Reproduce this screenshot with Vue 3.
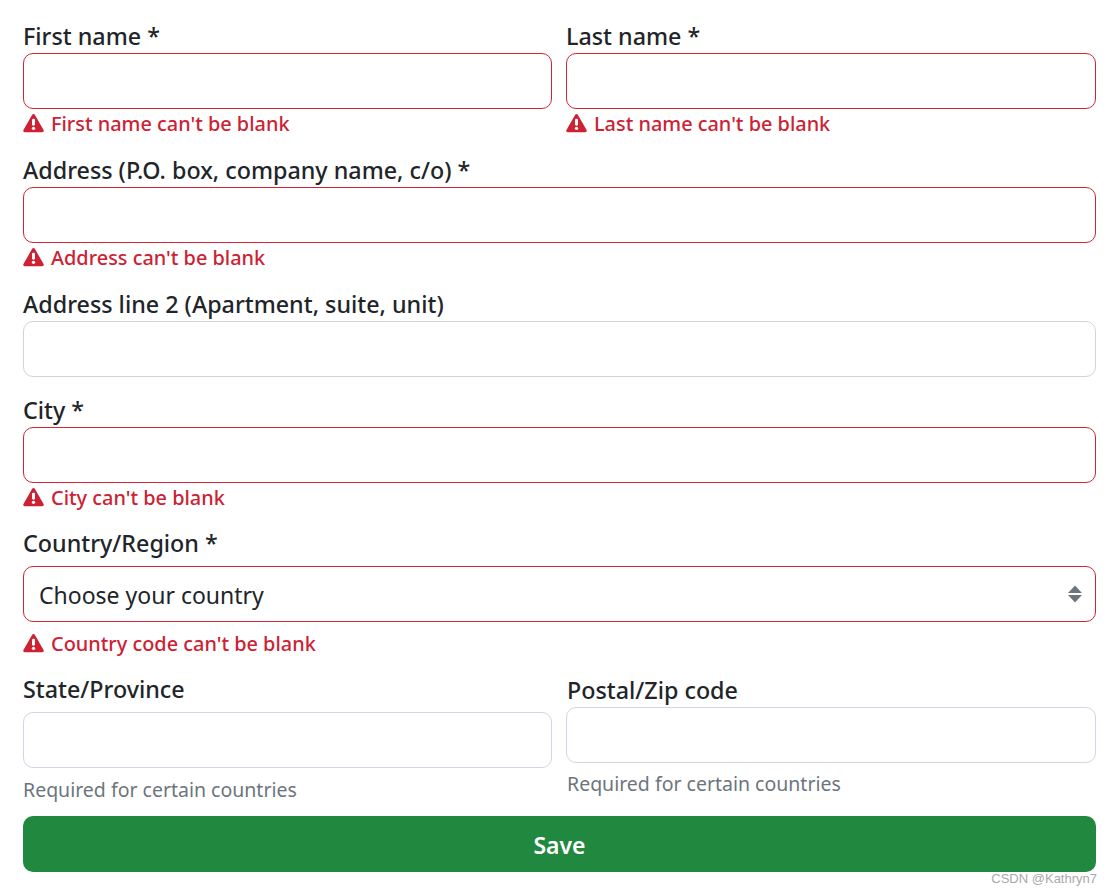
<script setup>
const errorIconPath = 'M10.5 1.2c.7-1.2 2.3-1.2 3 0l10 17.2c.7 1.2-.1 2.6-1.5 2.6H2c-1.4 0-2.200-1.400-1.500-2.600z'
</script>

<template>
  <form class="page" @submit.prevent>
    <div class="two">
      <div class="field err-gap">
        <label>First name *</label>
        <input class="ctl invalid" type="text" />
        <div class="error">
          <svg class="ico" viewBox="0 0 24 21"><path :d="errorIconPath" fill="#cc2233" /><rect x="10.300" y="5.500" width="3.400" height="8" rx="1.500" fill="#fff" /><circle cx="12" cy="16.600" r="1.900" fill="#fff" /></svg>
          <span>First name can't be blank</span>
        </div>
      </div>
      <div class="field err-gap">
        <label>Last name *</label>
        <input class="ctl invalid" type="text" />
        <div class="error">
          <svg class="ico" viewBox="0 0 24 21"><path :d="errorIconPath" fill="#cc2233" /><rect x="10.300" y="5.500" width="3.400" height="8" rx="1.500" fill="#fff" /><circle cx="12" cy="16.600" r="1.900" fill="#fff" /></svg>
          <span>Last name can't be blank</span>
        </div>
      </div>
    </div>

    <div class="field err-gap">
      <label>Address (P.O. box, company name, c/o) *</label>
      <input class="ctl invalid" type="text" />
      <div class="error">
        <svg class="ico" viewBox="0 0 24 21"><path :d="errorIconPath" fill="#cc2233" /><rect x="10.300" y="5.500" width="3.400" height="8" rx="1.500" fill="#fff" /><circle cx="12" cy="16.600" r="1.900" fill="#fff" /></svg>
        <span>Address can't be blank</span>
      </div>
    </div>

    <div class="field plain-gap">
      <label>Address line 2 (Apartment, suite, unit)</label>
      <input class="ctl" type="text" />
    </div>

    <div class="field city-gap">
      <label>City *</label>
      <input class="ctl invalid" type="text" />
      <div class="error">
        <svg class="ico" viewBox="0 0 24 21"><path :d="errorIconPath" fill="#cc2233" /><rect x="10.300" y="5.500" width="3.400" height="8" rx="1.500" fill="#fff" /><circle cx="12" cy="16.600" r="1.900" fill="#fff" /></svg>
        <span>City can't be blank</span>
      </div>
    </div>

    <div class="field country-gap">
      <label class="spaced">Country/Region *</label>
      <div class="select-wrap">
        <select class="ctl invalid sel">
          <option>Choose your country</option>
        </select>
        <svg class="updown" viewBox="0 0 14 18"><path d="M7 0.500L14 8H0z" fill="#6c757d" /><path d="M0 10h14L7 17.500z" fill="#6c757d" /></svg>
      </div>
      <div class="error">
        <svg class="ico" viewBox="0 0 24 21"><path :d="errorIconPath" fill="#cc2233" /><rect x="10.300" y="5.500" width="3.400" height="8" rx="1.500" fill="#fff" /><circle cx="12" cy="16.600" r="1.900" fill="#fff" /></svg>
        <span>Country code can't be blank</span>
      </div>
    </div>

    <div class="two last">
      <div class="field">
        <label class="spaced">State/Province</label>
        <input class="ctl soft" type="text" />
        <div class="help">Required for certain countries</div>
      </div>
      <div class="field postal">
        <label>Postal/Zip code</label>
        <input class="ctl soft" type="text" />
        <div class="help near">Required for certain countries</div>
      </div>
    </div>

    <button class="save" type="submit">Save</button>
    <div class="watermark">CSDN @Kathryn7</div>
  </form>
</template>

<style>
html, body { background: #fff; }
</style>

<style scoped>
.page {
  position: relative;
  box-sizing: border-box;
  width: 1112px;
  height: 896px;
  padding: 19px 16px 0 23px;
  font-family: "Noto Sans", "Open Sans", sans-serif;
  font-size: 24px;
  color: #212529;
  background: #fff;
}
.two {
  display: grid;
  grid-template-columns: 529px 530px;
  column-gap: 14px;
  align-items: start;
}
.field { display: flex; flex-direction: column; }
.err-gap { margin-bottom: 14px; }
.plain-gap { margin-bottom: 16px; }
.city-gap { margin-bottom: 13px; }
.country-gap { margin-bottom: 13px; }
label {
  display: block;
  height: 34px;
  line-height: 34px;
  font-size: 23.300px;
  font-weight: 500;
  white-space: nowrap;
}
label.spaced { margin-bottom: 6px; }
.postal { padding-top: 1px; padding-left: 1px; }
.ctl {
  display: block;
  box-sizing: border-box;
  width: 100%;
  height: 56px;
  margin: 0;
  padding: 0 14px;
  border: 1px solid #ced4da;
  border-radius: 10px;
  background: #fff;
  font: inherit;
  color: #212529;
  outline: none;
}
.invalid { border-color: #d32433; }
.soft { border-color: #d3d6e2; }
.postal .ctl { margin-left: -1px; width: calc(100% + 1px); }
.select-wrap { position: relative; margin-bottom: 7px; }
.sel { appearance: none; font-size: 23px; padding-top: 2px; padding-left: 15px; }
.updown {
  position: absolute;
  right: 14px;
  top: 19px;
  width: 14px;
  height: 18px;
}
.error {
  display: flex;
  align-items: center;
  gap: 7px;
  height: 28px;
  margin-bottom: 2px;
  font-size: 19.900px;
  font-weight: 500;
  color: #cc2233;
  white-space: nowrap;
}
.ico { width: 21px; height: 20px; flex: none; }
.help {
  margin-top: 7px;
  height: 30px;
  line-height: 30px;
  font-size: 19.500px;
  color: #6c757d;
  white-space: nowrap;
}
.help.near { margin-top: 6px; }
.last { margin-bottom: 11px; }
.save {
  display: block;
  width: 100%;
  height: 56px;
  padding: 2px 0 0;
  border: 0;
  border-radius: 10px;
  background: #20883f;
  color: #fff;
  font: inherit;
  font-weight: 600;
  font-size: 23px;
}
.watermark {
  position: absolute;
  right: 15px;
  top: 871px;
  font-family: "Liberation Sans", Arial, sans-serif;
  font-size: 13px;
  line-height: 16px;
  color: #a9a9a9;
  white-space: nowrap;
}
</style>
